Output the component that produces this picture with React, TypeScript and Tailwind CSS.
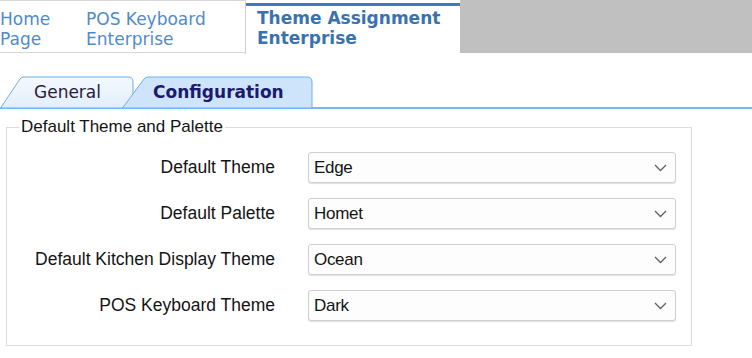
import React from 'react';

const ui = { fontFamily: '"Liberation Sans", Arial, sans-serif' };
const verdana = { fontFamily: '"DejaVu Sans", Verdana, sans-serif' };

const rows = [
  { label: 'Default Theme', value: 'Edge' },
  { label: 'Default Palette', value: 'Homet' },
  { label: 'Default Kitchen Display Theme', value: 'Ocean' },
  { label: 'POS Keyboard Theme', value: 'Dark' },
];

const Chevron = () => (
  <svg width="13" height="8" viewBox="0 0 13 8" className="shrink-0">
    <path d="M1 1 L6.5 6.5 L12 1" fill="none" stroke="#606060" strokeWidth="1.3" />
  </svg>
);

const Select = ({ value }: { value: string }) => (
  <div className="w-[368px] h-[31px] flex items-center justify-between pl-[5px] pr-[8px] bg-[#fdfdfd] border border-[#cfcfcf] rounded-[3px] shadow-[0_1px_1px_rgba(0,0,0,0.12)] text-[17px] text-[#141414]">
    <span className="tracking-[-0.3px]">{value}</span>
    <Chevron />
  </div>
);

export default function App() {
  return (
    <div className="w-[752px] h-[358px] bg-white overflow-hidden" style={ui}>
      {/* top document tabs */}
      <div className="flex h-[53px] bg-[#c0c0c0]">
        <div className="w-[245px] flex bg-white border-t border-b border-[#d6d6d6] pt-[8px] text-[17px] leading-[20px] text-[#4f8bcb]" style={verdana}>
          <div className="w-[86px]">Home<br />Page</div>
          <div>POS Keyboard<br />Enterprise</div>
        </div>
        <div className="w-[215px] h-[54px] bg-white border-l border-[#d0d0d0] pt-[3px]">
          <div className="h-[3px] bg-[#3d7dbf]" />
          <div className="pl-[11px] pt-[2px] text-[17px] leading-[20px] font-bold text-[#3a72b0]" style={verdana}>
            Theme Assignment<br />Enterprise
          </div>
        </div>
      </div>

      {/* inner tabs */}
      <div className="mt-[23px] flex items-end h-[33px] border-b-2 border-[#7ab6f4]">
        <div className="relative w-[134px] h-[32px] -mb-[1px]">
          <svg className="absolute inset-0" width="134" height="32" viewBox="0 0 134 32">
            <defs>
              <linearGradient id="g1" x1="0" y1="0" x2="0" y2="1">
                <stop offset="0" stopColor="#f4f9ff" />
                <stop offset="1" stopColor="#e2eefb" />
              </linearGradient>
            </defs>
            <path d="M0.5 32 L20 3 Q21.5 1 24 1 L128 1 Q133 1 133 6 L133 32 Z" fill="url(#g1)" stroke="#6faaf0" strokeWidth="1" />
          </svg>
          <div className="relative pl-[34px] pt-[4px] text-[17px] text-[#2a1a3a]" style={verdana}>General</div>
        </div>
        <div className="relative w-[191px] h-[32px] -ml-[12px] -mb-[1px]">
          <svg className="absolute inset-0" width="191" height="32" viewBox="0 0 191 32">
            <path d="M0.5 32 L22 3 Q23.5 1 26 1 L185 1 Q190 1 190 6 L190 32 Z" fill="#cde4fb" stroke="#6faaf0" strokeWidth="1" />
          </svg>
          <div className="relative pl-[31px] pt-[4px] text-[17px] font-bold text-[#1c1a6c]" style={verdana}>Configuration</div>
        </div>
      </div>

      {/* group box */}
      <div className="relative ml-[6px] mt-[18px] w-[686px] h-[219px] border border-[#dcdcdc]">
        <div className="absolute -top-[11px] left-[12px] px-[2px] bg-white text-[17px] leading-[20px] text-[#141414]">
          Default Theme and Palette
        </div>
        <div className="pt-[24px] flex flex-col gap-[15px]">
          {rows.map((r) => (
            <div key={r.label} className="flex items-center">
              <div className="w-[268px] text-right text-[17.5px] text-[#141414]">{r.label}</div>
              <div className="ml-[33px]">
                <Select value={r.value} />
              </div>
            </div>
          ))}
        </div>
      </div>
    </div>
  );
}
